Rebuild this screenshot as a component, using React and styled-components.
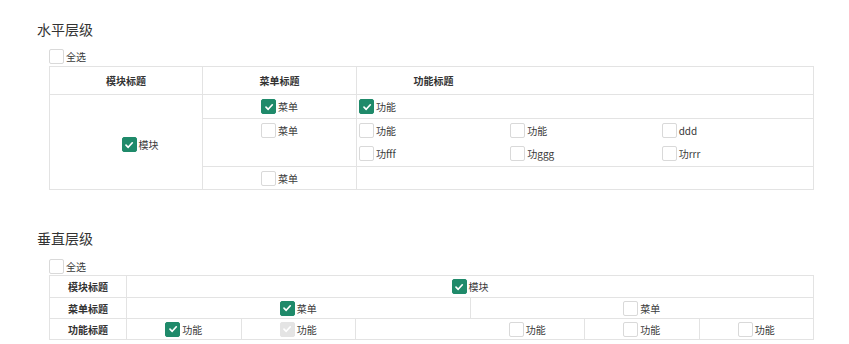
import React from 'react';
import styled, { createGlobalStyle } from 'styled-components';

const GlobalStyle = createGlobalStyle`
  body {
    margin: 0;
    background: #fff;
    font-family: "Noto Sans CJK SC", "Noto Sans", sans-serif;
    color: #333;
  }
`;

const Page = styled.div`
  padding: 19px 35px 0 37px;
  width: 849px;
  box-sizing: border-box;
`;

const Section = styled.section`
  margin-bottom: ${(p) => p.$gap || 0}px;
`;

const Title = styled.h2`
  margin: 0;
  font-size: 14px;
  font-weight: normal;
  line-height: 20px;
  color: #333;
`;

const Body = styled.div`
  margin: ${(p) => p.$top}px 0 0 12px;
`;

const SelectAll = styled.div`
  height: ${(p) => p.$h}px;
  display: flex;
  align-items: flex-start;
`;

const Box = styled.span`
  width: 15px;
  height: 15px;
  box-sizing: border-box;
  border-radius: 2px;
  flex: none;
  display: inline-flex;
  align-items: center;
  justify-content: center;
  border: 1px solid ${(p) => (p.$checked ? '#1f8a6a' : p.$disabled ? '#e4e4e4' : '#d9d9d9')};
  background: ${(p) => (p.$checked ? '#1f8a6a' : p.$disabled ? '#e4e4e4' : '#fff')};
`;

const Label = styled.span`
  font-size: 10px;
  line-height: 15px;
  margin-left: 2px;
  color: #3a3a3a;
  white-space: nowrap;
`;

const CheckWrap = styled.span`
  display: inline-flex;
  align-items: center;
`;

const Check = ({ checked, disabled, label }) => (
  <CheckWrap>
    <Box $checked={checked} $disabled={disabled}>
      {(checked || disabled) && (
        <svg width="10" height="10" viewBox="0 0 10 10">
          <path d="M2 5.2 L4.2 7.3 L8.3 2.8" fill="none" stroke="#fff" strokeWidth="1.7" strokeLinecap="round" strokeLinejoin="round" />
        </svg>
      )}
    </Box>
    {label && <Label>{label}</Label>}
  </CheckWrap>
);

/* horizontal table */
const HGrid = styled.div`
  display: grid;
  width: 765px;
  grid-template-columns: 153px 154px 1fr;
  grid-template-rows: 28px 24px 48px 23px;
  border-top: 1px solid #e3e3e3;
  border-left: 1px solid #e3e3e3;
  box-sizing: border-box;
`;

const Cell = styled.div`
  border-right: ${(p) => (p.$noRight ? 'none' : '1px solid #e3e3e3')};
  border-bottom: 1px solid #e3e3e3;
  display: flex;
  justify-content: ${(p) => p.$justify || 'center'};
  align-items: ${(p) => p.$align || 'center'};
  padding-left: ${(p) => p.$pl || 0}px;
  padding-top: ${(p) => p.$pt || 0}px;
  min-width: 0;
  box-sizing: border-box;
`;

const Head = styled.span`
  font-size: 10px;
  font-weight: bold;
  color: #333;
  width: ${(p) => (p.$w ? `${p.$w}px` : 'auto')};
  text-align: center;
`;

const Item = styled.div`
  height: 23px;
  display: flex;
  align-items: center;
  justify-content: ${(p) => p.$justify || 'flex-start'};
`;

const Funcs = styled.div`
  display: grid;
  width: 100%;
  grid-template-columns: repeat(3, 1fr);
  padding-left: 2px;
`;

/* vertical table */
const VGrid = styled.div`
  display: grid;
  width: 765px;
  grid-template-columns: 77px repeat(6, 1fr);
  grid-template-rows: 22px 21px 21px;
  border-top: 1px solid #e3e3e3;
  border-left: 1px solid #e3e3e3;
  box-sizing: border-box;
`;

const Span = styled(Cell)`
  grid-column: span ${(p) => p.$span};
`;

const hFuncs = ['功能', '功能', 'ddd', '功fff', '功ggg', '功rrr'];

export default function App() {
  return (
    <Page>
      <GlobalStyle />
      <Section $gap={38}>
        <Title>水平层级</Title>
        <Body $top={10}>
          <SelectAll $h={17}>
            <Check label="全选" />
          </SelectAll>
          <HGrid>
            <Cell><Head>模块标题</Head></Cell>
            <Cell><Head>菜单标题</Head></Cell>
            <Cell $justify="flex-start"><Head $w={153}>功能标题</Head></Cell>

            <Cell style={{ gridRow: '2 / span 3' }} $pl={28} $pt={5}>
              <Check checked label="模块" />
            </Cell>

            <Cell $align="flex-start"><Item><Check checked label="菜单" /></Item></Cell>
            <Cell $align="flex-start" $justify="flex-start" $pl={2}>
              <Item><Check checked label="功能" /></Item>
            </Cell>

            <Cell $align="flex-start"><Item><Check label="菜单" /></Item></Cell>
            <Cell $align="flex-start" $justify="flex-start">
              <Funcs>
                {hFuncs.map((f, i) => (
                  <Item key={i}><Check label={f} /></Item>
                ))}
              </Funcs>
            </Cell>

            <Cell $align="flex-start"><Item><Check label="菜单" /></Item></Cell>
            <Cell />
          </HGrid>
        </Body>
      </Section>

      <Section>
        <Title>垂直层级</Title>
        <Body $top={11}>
          <SelectAll $h={16}>
            <Check label="全选" />
          </SelectAll>
          <VGrid>
            <Cell><Head>模块标题</Head></Cell>
            <Span $span={6}><Check checked label="模块" /></Span>

            <Cell><Head>菜单标题</Head></Cell>
            <Span $span={3}><Check checked label="菜单" /></Span>
            <Span $span={3}><Check label="菜单" /></Span>

            <Cell><Head>功能标题</Head></Cell>
            <Cell><Check checked label="功能" /></Cell>
            <Cell><Check disabled label="功能" /></Cell>
            <Cell $noRight />
            <Cell><Check label="功能" /></Cell>
            <Cell><Check label="功能" /></Cell>
            <Cell><Check label="功能" /></Cell>
          </VGrid>
        </Body>
      </Section>
    </Page>
  );
}
